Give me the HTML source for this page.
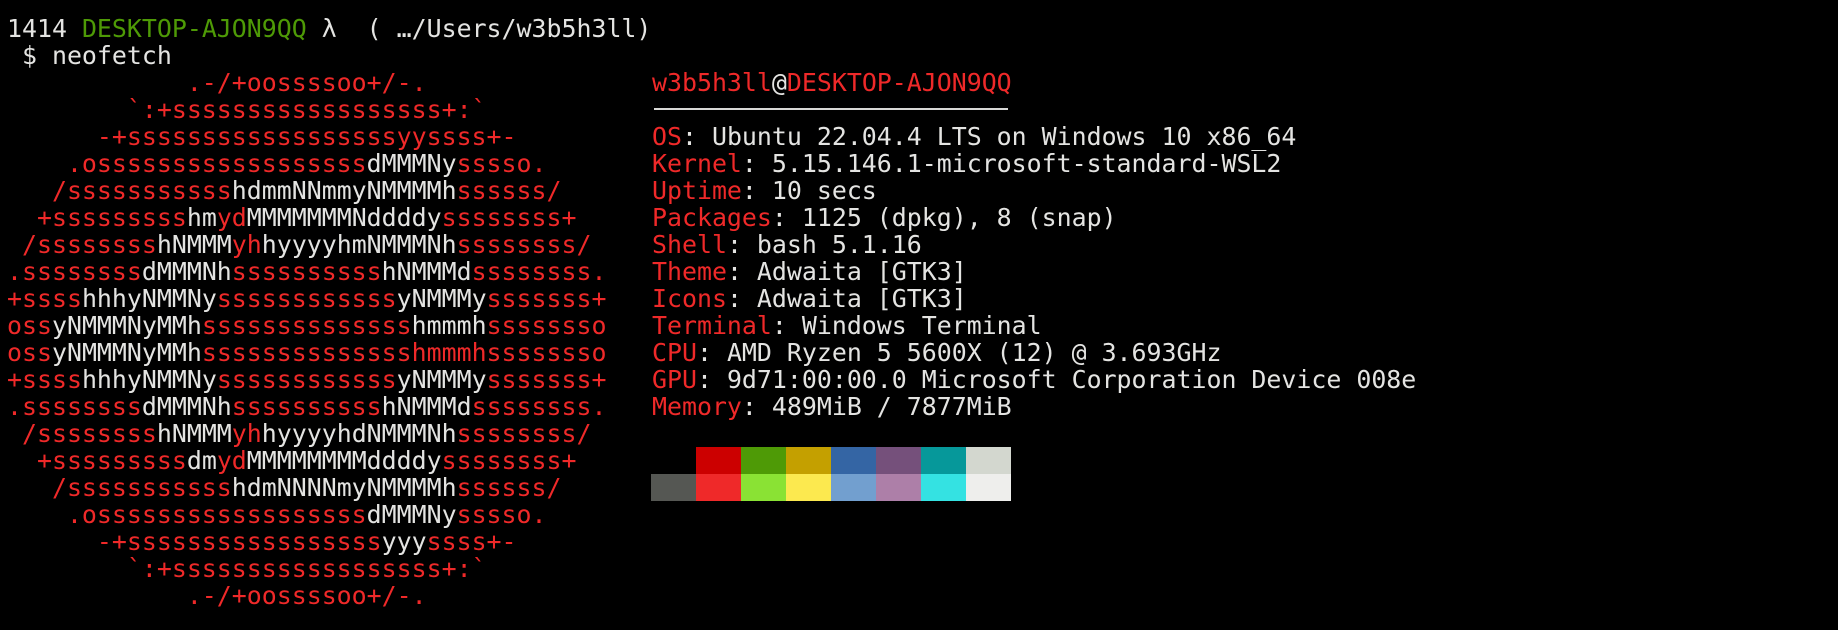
<!DOCTYPE html>
<html><head><meta charset="utf-8"><style>
html,body{margin:0;padding:0;background:#000;width:1838px;height:630px;overflow:hidden}
pre{position:absolute;margin:0;font-family:"DejaVu Sans Mono","Liberation Mono",monospace;font-size:24.9px;line-height:27px;color:#e4e4e2;white-space:pre}
.r{color:#ef2929}.g{color:#4e9a06}.w{color:#e4e4e2}
.sw{position:absolute;width:45px;height:27px}
</style></head><body>
<pre style="left:7px;top:15px">1414 <span class="g">DESKTOP-AJON9QQ</span> λ  ( …/Users/w3b5h3ll)
 $ neofetch
<span class="r">            .-/+oossssoo+/-.
        `:+ssssssssssssssssss+:`
      -+ssssssssssssssssssyyssss+-
    .ossssssssssssssssss</span>dMMMNy<span class="r">sssso.
   /sssssssssss</span>hdmmNNmmyNMMMMh<span class="r">ssssss/
  +sssssssss</span>hm<span class="r">yd</span>MMMMMMMNddddy<span class="r">ssssssss+
 /ssssssss</span>hNMMM<span class="r">yh</span>hyyyyhmNMMMNh<span class="r">ssssssss/
.ssssssss</span>dMMMNh<span class="r">ssssssssss</span>hNMMMd<span class="r">ssssssss.
+ssss</span>hhhyNMMNy<span class="r">ssssssssssss</span>yNMMMy<span class="r">sssssss+
oss</span>yNMMMNyMMh<span class="r">ssssssssssssss</span>hmmmh<span class="r">ssssssso
oss</span>yNMMMNyMMh<span class="r">sssssssssssssshmmmhssssssso
+ssss</span>hhhyNMMNy<span class="r">ssssssssssss</span>yNMMMy<span class="r">sssssss+
.ssssssss</span>dMMMNh<span class="r">ssssssssss</span>hNMMMd<span class="r">ssssssss.
 /ssssssss</span>hNMMM<span class="r">yh</span>hyyyyhdNMMMNh<span class="r">ssssssss/
  +sssssssss</span>dm<span class="r">yd</span>MMMMMMMMddddy<span class="r">ssssssss+
   /sssssssssss</span>hdmNNNNmyNMMMMh<span class="r">ssssss/
    .ossssssssssssssssss</span>dMMMNy<span class="r">sssso.
      -+sssssssssssssssss</span>yyy<span class="r">ssss+-
        `:+ssssssssssssssssss+:`
            .-/+oossssoo+/-.</span></pre>
<pre style="left:652px;top:69px"><span class="r">w3b5h3ll</span>@<span class="r">DESKTOP-AJON9QQ</span>

<span class="r">OS</span>: Ubuntu 22.04.4 LTS on Windows 10 x86_64
<span class="r">Kernel</span>: 5.15.146.1-microsoft-standard-WSL2
<span class="r">Uptime</span>: 10 secs
<span class="r">Packages</span>: 1125 (dpkg), 8 (snap)
<span class="r">Shell</span>: bash 5.1.16
<span class="r">Theme</span>: Adwaita [GTK3]
<span class="r">Icons</span>: Adwaita [GTK3]
<span class="r">Terminal</span>: Windows Terminal
<span class="r">CPU</span>: AMD Ryzen 5 5600X (12) @ 3.693GHz
<span class="r">GPU</span>: 9d71:00:00.0 Microsoft Corporation Device 008e
<span class="r">Memory</span>: 489MiB / 7877MiB</pre>
<div style="position:absolute;left:654px;top:108px;width:354px;height:2px;background:#d8d8d6"></div>
<div class="sw" style="left:696px;top:447px;background:#cc0000"></div>
<div class="sw" style="left:741px;top:447px;background:#4e9a06"></div>
<div class="sw" style="left:786px;top:447px;background:#c4a000"></div>
<div class="sw" style="left:831px;top:447px;background:#3465a4"></div>
<div class="sw" style="left:876px;top:447px;background:#75507b"></div>
<div class="sw" style="left:921px;top:447px;background:#06989a"></div>
<div class="sw" style="left:966px;top:447px;background:#d3d7cf"></div>
<div class="sw" style="left:651px;top:474px;background:#555753"></div>
<div class="sw" style="left:696px;top:474px;background:#ef2929"></div>
<div class="sw" style="left:741px;top:474px;background:#8ae234"></div>
<div class="sw" style="left:786px;top:474px;background:#fce94f"></div>
<div class="sw" style="left:831px;top:474px;background:#729fcf"></div>
<div class="sw" style="left:876px;top:474px;background:#ad7fa8"></div>
<div class="sw" style="left:921px;top:474px;background:#34e2e2"></div>
<div class="sw" style="left:966px;top:474px;background:#eeeeec"></div>
</body></html>
